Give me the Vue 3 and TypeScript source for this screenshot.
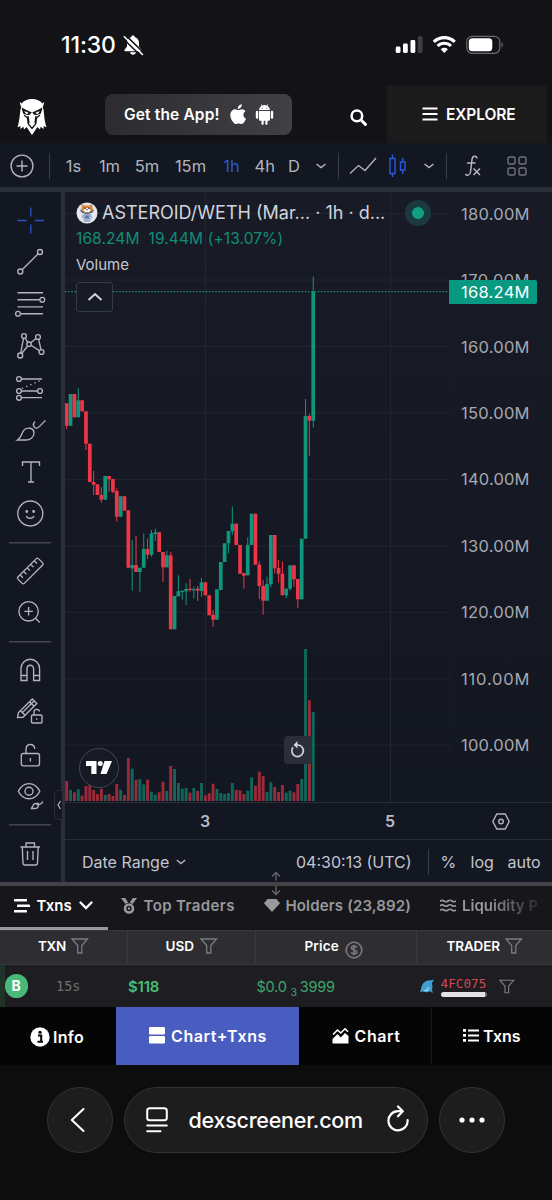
<script setup lang="ts">
type Candle = [number, number, number, number, 0 | 1]

const STEP = 3.852
const FIRST_X = 66.7

// [body top, body bottom, wick top, wick bottom, rising]
const candles: Candle[] = [
  [403.3, 425.7, 403.3, 429.3, 0], [394, 425.7, 394, 425.7, 1], [394, 417.3, 394, 417.3, 0], [400.3, 417.3, 388.3, 417.3, 1],
  [400.3, 411.3, 400.3, 411.3, 0], [411.3, 443.7, 411.3, 450, 0], [443.7, 482, 443.7, 482, 0], [482, 484.7, 471, 495, 0],
  [484.3, 495, 484.3, 495, 0], [495, 499.7, 487.3, 502.7, 0], [476, 499.7, 476, 499.7, 1], [476, 479.3, 476, 491.7, 0],
  [479, 491.7, 479, 493.3, 0], [491, 516.7, 488.3, 521.3, 0], [496.3, 516.7, 496.3, 516.7, 1], [496.3, 510.7, 496.3, 510.7, 0],
  [510.3, 567.7, 510.3, 567.7, 0], [565, 568.3, 540, 590.7, 1], [565, 572, 536, 572, 0], [567.7, 572, 567.7, 591.7, 1],
  [549, 567.7, 533.3, 567.7, 1], [549, 554.7, 538.3, 559, 0], [533.3, 554.7, 530, 556.7, 1], [532.3, 534, 528.7, 541, 1],
  [532.3, 552, 532.3, 552, 0], [552, 567.3, 552, 582, 0], [555.3, 567.3, 550.7, 567.3, 1], [555.3, 629.3, 551.7, 629.3, 0],
  [596, 629.3, 596, 629.3, 1], [591.3, 596.3, 575.3, 596.3, 1], [590.7, 592, 590.7, 599.7, 1], [589, 591.3, 583.3, 605, 1],
  [588.7, 590, 579, 591.7, 0], [589, 590.3, 586.7, 598.3, 1], [588.7, 590.7, 586, 601, 0], [582.3, 591, 577.7, 596.7, 1],
  [582.3, 595.3, 582.3, 595.3, 0], [595.3, 615.3, 595.3, 615.3, 0], [614.7, 619.7, 610, 627, 0], [589.3, 619.7, 589.3, 619.7, 1],
  [562, 590, 562, 590, 1], [543.3, 562, 543.3, 562, 1], [531, 543.3, 531, 553.3, 1], [523.7, 531.3, 506.7, 535, 1],
  [523.7, 545, 523.7, 545, 0], [545, 573.7, 545, 573.7, 0], [573, 575.7, 573, 588.7, 0], [545, 575.3, 537.3, 575.3, 1],
  [513.7, 545, 513.7, 545, 1], [513.7, 564.7, 513.7, 564.7, 0], [564.7, 586, 561, 599, 0], [586, 600.7, 580, 614.7, 0],
  [584, 600.7, 576.7, 600.7, 1], [535, 584.3, 535, 587.3, 1], [535, 568.3, 535, 573.3, 0], [568, 573.7, 560, 582.7, 0],
  [573.7, 595.3, 561.7, 595.3, 0], [588.7, 595.3, 588.7, 598.3, 1], [565.3, 588.7, 565.3, 590.7, 1], [565.3, 579.3, 565.3, 586.7, 0],
  [579, 599.3, 579, 607.7, 0], [538.7, 599.3, 538.7, 599.3, 1], [416, 538.7, 399, 538.7, 1], [416, 420.7, 414, 455.7, 0],
  [291.7, 420.7, 276.7, 427.3, 1],
]

const volumes: number[] = [
  20, 11, 8.7, 11.7, 5.3, 15, 16, 11, 7, 12.3, 6, 7, 5, 17, 11.3, 6, 43, 32.3, 21.3, 22, 16.7, 21.3, 9.3, 6.3, 8.7,
  19.3, 10, 35, 32, 18, 12.3, 13, 8.3, 13, 10, 18, 5.7, 7.7, 17.3, 12, 8, 7, 8, 18, 11, 10.7, 7, 10.3, 23.7, 15.3,
  29.3, 25, 9, 18.7, 14, 9, 16, 8.3, 10.3, 8.7, 17, 22, 152, 100.7, 89,
]

const cx = (i: number): number => FIRST_X + i * STEP
const tone = (i: number): string => (candles[i][4] ? 'up' : 'down')

const prices = [180, 170, 160, 150, 140, 130, 120, 110, 100].map((value, i) => ({
  label: `${value}.00M`,
  y: 213.6 + i * 66.45,
}))

const intervals = ['1s', '1m', '5m', '15m', '1h', '4h', 'D']
</script>

<template>
  <div class="phone">
    <div class="status">
      <span class="clock">11:30</span>
      <svg class="bell" width="22" height="22" viewBox="0 0 22 22">
        <path d="M11 1.500c-1 0-1.700.6-1.800 1.500C6.500 3.900 5 6 5 9v3.500L2.600 15.700c-.5.9 0 1.500.8 1.500h15.200c.8 0 1.300-.6.8-1.500L17 12.500V9c0-3-1.500-5.100-4.200-6-.1-.9-.8-1.500-1.800-1.500zM8 18.300c.3 1.500 1.500 2.400 3 2.400s2.700-.9 3-2.400z" fill="#fff" />
        <path d="M3.500 1.200L22 19" stroke="#121217" stroke-width="1.600" />
        <path d="M2.300 2.800L20.500 20.500" stroke="#fff" stroke-width="1.600" stroke-linecap="round" />
        <path d="M1 4.500L18.500 21.500" stroke="#121217" stroke-width="1.500" />
      </svg>
      <svg class="signals" width="112" height="22" viewBox="394 34 112 22">
        <rect x="395.700" y="48.500" width="4.800" height="6.500" rx="1.400" fill="#fff" transform="translate(0 -2)" />
        <rect x="403" y="43.500" width="4.800" height="9.500" rx="1.400" fill="#fff" />
        <rect x="410.500" y="40" width="4.800" height="13" rx="1.400" fill="#fff" />
        <rect x="417.800" y="36.300" width="4.800" height="16.700" rx="1.400" fill="#3e3e43" />
        <g fill="none" stroke="#fff" stroke-width="3.100">
          <path d="M433.800 41.800a15.200 15.200 0 0 1 21 0" />
          <path d="M437.600 46a9.600 9.600 0 0 1 13.400 0" />
        </g>
        <path d="M444.300 53l-3.600-3.700a5.200 5.200 0 0 1 7.200 0z" fill="#fff" />
        <rect x="466.800" y="36.300" width="33" height="17" rx="5.300" fill="none" stroke="#6c6c70" stroke-width="1.200" />
        <rect x="468.800" y="38.300" width="23.500" height="13" rx="3.500" fill="#fff" />
        <path d="M501.600 42v5.500c1.700-.7 1.700-4.800 0-5.500z" fill="#6c6c70" />
      </svg>
    </div>

    <header class="header">
      <svg class="logo" width="30" height="36" viewBox="0 0 30 36">
        <path fill="#fff" d="M15 0c4.500 0 8.300 1.600 10.300 4.600l1.900-1.500c-.2 2-.6 3.300-1.400 4.700 1.600 4.800 1 12.400 3.700 20.400l-3-1.200.3 3-3.200-2.300-.6 2.700-2.600-2.300L15 36l-5.400-7.900L7 30.400l-.6-2.700-3.200 2.300.3-3-3 1.200C3.200 20.200 2.600 12.600 4.200 7.800 3.400 6.400 3 5.100 2.800 3.100l1.900 1.500C6.700 1.600 10.500 0 15 0z" />
        <path fill="#121217" d="M4.500 8.500l7.500 3.700 3 1.300 3-1.300 7.500-3.700-1.600 6-5.100 1.800-2.200-1.100L15 12.700l-1.600 2.500-2.200 1.100-5.100-1.800z" />
        <path fill="#fff" d="M7.500 12l4 1.800-.8 1.200-2.400-.8zM22.500 12l-4 1.800.8 1.200 2.400-.8z" />
        <path fill="none" stroke="#121217" stroke-width="1.300" d="M7 16l3.500 3 .7 5.700L15 29.500l3.800-4.800.7-5.700L23 16M11 17l1 7M19 17l-1 7" />
      </svg>
      <div class="get-app">
        <span class="get-label">Get the App!</span>
        <svg width="17" height="21" viewBox="0 0 17 21" fill="#fff">
          <path d="M11.800.2c.2 1.300-.4 2.500-1.100 3.400-.7.900-1.800 1.500-2.900 1.400-.2-1.200.4-2.500 1.100-3.300C9.700.9 10.800.3 11.800.2zM16 14.800c-.4 1.100-1 2.100-1.600 3-.9 1.300-1.700 2.300-2.900 2.300s-1.500-.7-2.900-.7c-1.400 0-1.800.7-2.900.7-1.200 0-2.100-1.200-3-2.500C.4 14.700-.8 9.600 1.800 6.900c.9-1 2.100-1.600 3.300-1.600 1.300 0 2.300.8 3.400.8s1.800-.8 3.500-.8c1.300 0 2.600.7 3.500 1.900-3.200 1.900-2.600 6.400.5 7.600z" />
        </svg>
        <svg class="android" width="19" height="21" viewBox="0 0 19 21" fill="#fff">
          <path d="M4 6.100C4.200 3.800 5.400 2.500 6.700 1.700L5.900.3l.4-.2.900 1.400a6.500 6.500 0 0 1 4.600 0l.9-1.400.4.2-.8 1.400c1.300.8 2.500 2.100 2.700 4.400zM4 6.900h11v8.600c0 .8-.5 1.300-1.300 1.300H12.500v3c0 1.500-2.200 1.500-2.200 0v-3H8.700v3c0 1.500-2.200 1.500-2.200 0v-3H5.300c-.8 0-1.300-.5-1.300-1.300z" />
          <rect x=".8" y="6.700" width="2.400" height="8" rx="1.200" />
          <rect x="15.800" y="6.700" width="2.400" height="8" rx="1.200" />
          <circle cx="7.200" cy="4" r=".6" fill="#444" /><circle cx="11.800" cy="4" r=".6" fill="#444" />
        </svg>
      </div>
      <svg class="search" width="17" height="17" viewBox="0 0 17 17" fill="none" stroke="#fff" stroke-linecap="round">
        <circle cx="6.900" cy="6.900" r="5.300" stroke-width="2.500" />
        <path d="M11 11l4.400 4.400" stroke-width="3" />
      </svg>
      <div class="explore">
        <svg width="16" height="14" viewBox="0 0 16 14" stroke="#fff" stroke-width="2"><path d="M.5 1.500h15M.5 7h15M.5 12.500h15" /></svg>
        <span>EXPLORE</span>
      </div>
    </header>

    <div class="toolbar">
      <svg class="plus" width="24" height="24" viewBox="0 0 24 24" fill="none" stroke="#b2b5be" stroke-width="1.400">
        <circle cx="12" cy="12" r="10.900" /><path d="M12 6.500v11M6.500 12h11" />
      </svg>
      <i class="tsep"></i>
      <span v-for="(item, i) in intervals" :key="item" class="interval" :class="['iv' + i, { active: item === '1h' }]">{{ item }}</span>
      <svg class="tchev" width="12" height="8" viewBox="0 0 12 8" fill="none" stroke="#b2b5be" stroke-width="1.500"><path d="M1.500 2l4.500 3.500L10.500 2" /></svg>
      <i class="tsep sep2"></i>
      <svg class="linetype" width="28" height="20" viewBox="0 0 28 20" fill="none" stroke="#b2b5be" stroke-width="1.300"><path d="M1 17.500l8.500-8 6.500 5L27 2" /></svg>
      <svg class="candletype" width="20" height="26" viewBox="0 0 20 26" fill="none" stroke="#2b57d9" stroke-width="1.500"><path d="M2 5.500h5v15H2zM4.500 5.500V1.500M4.500 20.500v3.500M12.500 9h4.500v8h-4.500zM14.700 9V5M14.700 17v4" /></svg>
      <svg class="tchev2" width="12" height="8" viewBox="0 0 12 8" fill="none" stroke="#b2b5be" stroke-width="1.500"><path d="M1.500 2l4.500 3.500L10.500 2" /></svg>
      <i class="tsep sep3"></i>
      <svg class="fx" width="18" height="22" viewBox="0 0 18 22" fill="none" stroke="#b2b5be" stroke-width="1.500">
        <path d="M13 3.500C12.500.5 8.500.3 8 4.500L6.500 17c-.4 3.600-3.800 4-5 2M3 8h8.500M9.500 13.500l6.500 6.500M16 13.500L9.500 20" />
      </svg>
      <svg class="tiles" width="20" height="20" viewBox="0 0 20 20" fill="none" stroke="#70747f" stroke-width="1.400">
        <rect x="1" y="1" width="7" height="7" rx="1.500" /><rect x="12" y="1" width="7" height="7" rx="1.500" />
        <rect x="1" y="12" width="7" height="7" rx="1.500" /><rect x="12" y="12" width="7" height="7" rx="1.500" />
      </svg>
    </div>

    <div class="workspace">
      <aside class="rail">
        <svg viewBox="0 0 42 42" class="cross"><path d="M8.500 21.500h9M26 21.500h9M21.800 8.500v9M21.800 25.500v9" /></svg>
        <svg viewBox="0 0 42 42"><circle cx="31" cy="11" r="2.500" /><circle cx="11.300" cy="30.500" r="2.500" /><path d="M29.200 12.800L13.100 28.700" /></svg>
        <svg viewBox="0 0 42 42"><path d="M8.500 9.700H34M8.500 16.700h22.300M8.500 23.800H34M11.500 30.700H34" /><circle cx="33.300" cy="16.700" r="2.400" /><circle cx="9" cy="30.700" r="2.400" /></svg>
        <svg viewBox="0 0 42 42"><circle cx="15" cy="11" r="2.400" /><circle cx="29" cy="12" r="2.400" /><circle cx="20" cy="19.200" r="2.200" /><circle cx="11.200" cy="30.500" r="2.500" /><circle cx="32.500" cy="27" r="2.400" /><path d="M14.500 13.400l-2.800 14.700M16.200 13.100l2.600 4.200M21.700 17.800l5.400-4.300M29.600 14.400l2.400 10.200M22 20.300l8.500 5.300M18.700 21l-6 7.500" /></svg>
        <svg viewBox="0 0 42 42"><circle cx="10" cy="12" r="2.400" /><path d="M12.400 12H33M12.400 24h16.200M12.400 30.600H33" /><path d="M13 21.500L33 13" stroke-dasharray="1.300 3.200" /><circle cx="10" cy="24" r="2.400" /><circle cx="31" cy="24" r="2.400" /><circle cx="10" cy="30.800" r="2.400" /></svg>
        <svg viewBox="0 0 42 42"><path d="M8.500 31c4-2.500 4-6.500 6-9.300 3-4.200 10.700-3.200 10.500 2.500-.2 4.300-4 6.800-8 6.800zM26 12.500c-3 3-1.300 7 2 6.500 2-.4 4.500-4 8.500-7.500" /></svg>
        <svg viewBox="0 0 42 42"><path d="M13.500 15v-4h17v4M22 11v20M19 31h6" /></svg>
        <svg viewBox="0 0 42 42"><circle cx="21.300" cy="20.500" r="12.500" /><path d="M17.500 22.800c.8 3.200 6.600 3.200 7.400 0" /><circle cx="17.800" cy="18.500" r=".8" class="dot" /><circle cx="24.600" cy="18.500" r=".8" class="dot" /></svg>
        <i class="rsep"></i>
        <svg viewBox="0 0 42 42"><g transform="translate(21.300 21) rotate(-45)"><rect x="-14.500" y="-4.500" width="29" height="9" rx="1.500" /><path d="M-10-4.500v4M-5-4.500v4M0-4.500v4M5-4.500v4M10-4.500v4" /></g></svg>
        <svg viewBox="0 0 42 42"><circle cx="19.600" cy="19.300" r="9.700" /><path d="M19.600 15v8.600M15.300 19.300h8.600M26.500 26.300l4.200 4.200" /></svg>
        <i class="rsep"></i>
        <svg viewBox="0 0 42 42"><path d="M12 31.500v-12a9.300 9.300 0 0 1 18.600 0v12h-6v-12a3.300 3.300 0 0 0-6.600 0v12zM12 26.500h6M24.600 26.500h6" /></svg>
        <svg viewBox="0 0 42 42"><path d="M8.500 26.500l1-5L23.300 8l4.500 4.500L14 26.300zM11.500 19.700l4.300 4.300M13.500 21.500L25 10M20.500 10.700l4.500 4.500" /><rect x="22.500" y="24" width="10.500" height="8" rx="1" /><path d="M25 24v-3c0-3.500 5-3.500 5.500-.5M27.700 27.300v1.500" /></svg>
        <svg viewBox="0 0 42 42"><rect x="12.300" y="20.500" width="18.200" height="12.300" rx="2" /><path d="M17 20.500v-4c0-6.500 8-6.500 8.800-.7M21.400 25v3.500" /></svg>
        <svg viewBox="0 0 42 42"><path d="M9.300 16.200C14.500 6 25.500 6 30.800 16.200 25.500 26.300 14.500 26.300 9.300 16.200z" /><circle cx="20" cy="16.200" r="4" /><path d="M22 33.500c2-1 1.500-5 4.500-5s4.500 5-1 5zM29 27.500c0 3 3 2.500 5-1" /></svg>
        <i class="rsep"></i>
        <svg viewBox="0 0 42 42"><path d="M11.500 15h19.500M17 15v-4h8.500v4M13.300 15l.7 16c0 1.300.6 2 2 2h10.500c1.400 0 2-.7 2-2l.7-16M18.500 19v9M24 19v9" /></svg>
      </aside>

      <div class="gutter">
        <svg class="collapse" width="8" height="30" viewBox="0 0 8 30"><path d="M8 .5H4.500a4 4 0 0 0-4 4v21a4 4 0 0 0 4 4H8" fill="#131722" stroke="#2a2e39" /><path d="M6.500 11L4 15l2.500 4" fill="none" stroke="#b2b5be" stroke-width="1.200" /></svg>
      </div>

      <div class="chart-col">
        <div class="plot">
          <svg class="chart" width="487" height="610" viewBox="65 192 487 610">
            <g class="grid">
              <path v-for="p in prices" :key="p.label" :d="`M65 ${p.y}H449`" />
              <path d="M205.500 192V802M390.500 192V802" />
            </g>
            <path d="M449.500 192V802" stroke="#171b25" />
            <g class="volume">
              <rect v-for="(v, i) in volumes" :key="i" :class="tone(i)" :x="cx(i) - 1.45" :y="801 - v" width="2.9" :height="v" />
            </g>
            <g>
              <g v-for="(c, i) in candles" :key="i" :class="tone(i)">
                <rect :x="cx(i) - 0.5" :y="c[2]" width="1" :height="c[3] - c[2]" />
                <rect :x="cx(i) - 1.85" :y="c[0]" width="3.7" :height="c[1] - c[0]" />
              </g>
            </g>
            <path d="M65 291.700H449" stroke="#109a80" stroke-width="1.200" stroke-dasharray="1.400 1.800" />
            <text v-for="p in prices" :key="p.label" class="price" x="461" :y="p.y + 6" textLength="68.5">{{ p.label }}</text>
            <path d="M449 280h86a2 2 0 0 1 2 2v20a2 2 0 0 1-2 2h-86z" fill="#089981" />
            <text class="price now" x="461" y="298" textLength="68.5">168.24M</text>
          </svg>
          <div class="legend">
            <div class="title-row">
              <svg width="22" height="22" viewBox="0 0 22 22">
                <circle cx="11" cy="11" r="10.500" fill="#e6e7ea" />
                <path d="M6 2l2.500 1.500h5L16 2l.8 5-1.800 3.500H7L5.300 7z" fill="#d98a45" />
                <ellipse cx="11" cy="8" rx="3.300" ry="2" fill="#fff" />
                <circle cx="9" cy="6.200" r=".8" fill="#222" /><circle cx="13" cy="6.200" r=".8" fill="#222" /><circle cx="11" cy="7.800" r=".7" fill="#222" />
                <path d="M5 7.500c0 5 12 5 12 0" fill="none" stroke="#51565f" stroke-width="1.300" />
                <path d="M7 12h8l1.500 4-2 .5v3.500h-7v-3.500l-2-.5z" fill="#9fb4d0" />
                <path d="M9 13.500h4v3H9z" fill="#5b7ba8" />
              </svg>
              <span class="pair">ASTEROID/WETH (Mar... · 1h · d...</span>
              <i class="live"></i>
            </div>
            <div class="change"><span>168.24M</span><span>19.44M (+13.07%)</span></div>
            <div class="vol-label">Volume</div>
            <div class="fold"><svg width="16" height="10" viewBox="0 0 16 10" fill="none" stroke="#d1d4dc" stroke-width="2"><path d="M1.500 8L8 2l6.500 6" /></svg></div>
          </div>
          <div class="tv">
            <svg width="26" height="14" viewBox="0 0 26 14" fill="#fff"><path d="M0 0h10.500v13H5.300V5H0z" /><circle cx="14.200" cy="2.600" r="2.500" /><path d="M18.500 0H26l-5.500 13h-6z" /></svg>
          </div>
          <div class="reset">
            <svg width="16" height="18" viewBox="0 0 16 18" fill="none" stroke="#d1d4dc" stroke-width="1.700"><path d="M3 6.200A5.800 5.800 0 1 0 8 4H4.500" /><path d="M7.500 0L3.500 4l4 3.500z" fill="#d1d4dc" stroke="none" /></svg>
          </div>
        </div>
        <div class="time-axis">
          <b class="day3">3</b><b class="day5">5</b>
          <svg class="gear" width="18" height="17" viewBox="0 0 18 17" fill="none" stroke="#b2b5be" stroke-width="1.400"><path d="M4.800 1h8.400l4 7.500-4 7.500H4.800L.8 8.500z" /><circle cx="9" cy="8.500" r="2.300" /></svg>
        </div>
        <div class="range-bar">
          <span class="range">Date Range</span>
          <svg width="10" height="8" viewBox="0 0 10 8" fill="none" stroke="#b2b5be" stroke-width="1.400"><path d="M.8 2L5 5.500 9.200 2" /></svg>
          <span class="utc">04:30:13 (UTC)</span>
          <i></i>
          <span class="pct">%</span><span class="log">log</span><span class="auto">auto</span>
        </div>
      </div>
    </div>

    <div class="split">
      <svg width="10" height="26" viewBox="0 0 10 26" fill="none" stroke="#67676c" stroke-width="1.300"><path d="M5 9.500V2M1 5.500l4-4 4 4M5 15v8M1 19.500l4 4 4-4" /></svg>
    </div>

    <nav class="tabs">
      <div class="tab on">
        <svg width="16" height="14" viewBox="0 0 16 14" fill="#fff"><rect x="0" y="0" width="13" height="2.600" rx=".7" /><rect x="3" y="5.500" width="13" height="2.600" rx=".7" /><rect x="0" y="11" width="13" height="2.600" rx=".7" /></svg>
        <span class="t-txns">Txns</span>
        <svg width="14" height="9" viewBox="0 0 14 9" fill="none" stroke="#fff" stroke-width="2.300" stroke-linecap="round"><path d="M1.500 1.500L7 7l5.500-5.500" /></svg>
      </div>
      <div class="tab top">
        <svg width="16" height="16" viewBox="0 0 16 16" fill="#99999c"><path d="M0 0h4.200l3 4.500-2.800 1.600zM16 0h-4.200l-3 4.500 2.800 1.600z" /><circle cx="8" cy="10.500" r="4" fill="none" stroke="#99999c" stroke-width="2.600" /><circle cx="8" cy="10.500" r="1.200" /></svg>
        <span>Top Traders</span>
      </div>
      <div class="tab hold">
        <svg width="16" height="13" viewBox="0 0 16 13" fill="#99999c"><path d="M3.500 0h9L16 4.300 8 13 0 4.300z" /></svg>
        <span>Holders (23,892)</span>
      </div>
      <div class="tab liq">
        <svg width="16" height="13" viewBox="0 0 16 13" fill="none" stroke="#99999c" stroke-width="1.700"><path d="M0 2.500Q2 .5 4 2t4 0 4 0 4 0M0 7Q2 5 4 6.500t4 0 4 0 4 0M0 11.500q2-2 4-.5t4 0 4 0 4 0" /></svg>
        <span>Liquidity P</span>
      </div>
    </nav>

    <div class="thead">
      <div class="c-txn"><span>TXN</span><svg width="18" height="16" viewBox="0 0 18 16"><path d="M1 1h15.500l-5.700 6.500V15H6.700V7.500z" /></svg></div>
      <div class="c-usd"><span>USD</span><svg width="18" height="16" viewBox="0 0 18 16"><path d="M1 1h15.500l-5.700 6.500V15H6.700V7.500z" /></svg></div>
      <div class="c-price"><span>Price</span><svg class="coin" width="18" height="18" viewBox="0 0 18 18"><circle cx="9" cy="9" r="7.800" /><path d="M11.800 6.800C11.300 4.500 6.500 4.600 6.500 7c0 2.500 5.300 1.500 5.300 4.100 0 2.300-5 2.300-5.500 0M9 3.700v10.600" /></svg></div>
      <div class="c-trader"><span>TRADER</span><svg width="18" height="16" viewBox="0 0 18 16"><path d="M1 1h15.500l-5.700 6.500V15H6.700V7.500z" /></svg></div>
    </div>

    <div class="trow">
      <i class="strip"></i>
      <b class="buy">B</b>
      <span class="age">15s</span>
      <b class="usd">$118</b>
      <span class="cost">$0.0<small>3</small>3999</span>
      <svg class="dolphin" width="14" height="15" viewBox="0 0 14 15"><path d="M13.500.5c-1 .8-1.800.6-3 .7C5 .8 1.500 5 1 10L0 13.500c1-.8 2-1 3-.9 2 .8 5 .8 7-.3l2.500 1.700c.3-1.300 0-2.300-.7-3 1-2.500.8-5 0-7 .9-.8 1.700-2 1.700-3.500z" fill="#3f9fd0" /><path d="M3 11.500c3-.5 5-2 5.500-4.500 1 2 .5 4-.8 5-1.500.5-3.500.3-4.700-.5z" fill="#93cfe9" /></svg>
      <div class="maker"><span>4FC075</span><i></i></div>
      <svg class="rowfunnel" width="16" height="15" viewBox="0 0 18 16"><path d="M1 1h15.500l-5.700 6.500V15H6.700V7.500z" /></svg>
    </div>

    <nav class="bottom">
      <div class="b-info"><svg width="20" height="20" viewBox="0 0 20 20"><circle cx="10" cy="10" r="9.700" fill="#fff" /><path d="M8 8.500h3.200v5.800M7.500 14.800h5.500" stroke="#050505" stroke-width="2" fill="none" /><circle cx="10" cy="5.300" r="1.600" fill="#050505" /></svg><span>Info</span></div>
      <div class="b-both"><svg width="16" height="17" viewBox="0 0 16 17" fill="#fff"><rect width="16" height="7.500" rx="1.200" /><rect y="9" width="16" height="7.500" rx="1.200" /></svg><span>Chart+Txns</span></div>
      <div class="b-chart"><svg width="17" height="16" viewBox="0 0 17 16"><path d="M1 6.500L5.500 2l3.300 3L13 .8l3 3" fill="none" stroke="#fff" stroke-width="1.600" /><path d="M.5 15.500V11l5-5 3.300 3.500L13 5l3.500 3v7.500z" fill="#fff" /></svg><span>Chart</span></div>
      <div class="b-txns"><svg width="16" height="13" viewBox="0 0 16 13" fill="#fff"><path d="M0 0h3v2.800H0zM0 5h3v2.800H0zM0 10h3v2.800H0zM5 .4h11v2H5zM5 5.400h11v2H5zM5 10.400h11v2H5z" /></svg><span>Txns</span></div>
    </nav>

    <footer class="browser">
      <div class="round"><svg width="15" height="26" viewBox="0 0 15 26" fill="none" stroke="#fff" stroke-width="2" stroke-linecap="round" stroke-linejoin="round"><path d="M13.500 2L1.800 13l11.700 11" /></svg></div>
      <div class="pill">
        <svg class="reader" width="22" height="26" viewBox="0 0 22 26" fill="none" stroke="#fff" stroke-width="2" stroke-linecap="round"><rect x="1.200" y="1.200" width="19.600" height="12" rx="2.500" /><path d="M1.200 18.500h19.600M1.200 24.300h13.300" /></svg>
        <span>dexscreener.com</span>
        <svg class="reload" width="22" height="27" viewBox="0 0 22 27" fill="none" stroke="#fff" stroke-width="2.200" stroke-linecap="round" stroke-linejoin="round"><path d="M20.600 15A9.600 9.600 0 1 1 11 6.200h4.500M11 1.500l4.800 4.800-4.800 5" /></svg>
      </div>
      <div class="round dots"><svg width="26" height="6" viewBox="0 0 26 6" fill="#fff"><circle cx="3" cy="3" r="2.600" /><circle cx="13" cy="3" r="2.600" /><circle cx="23" cy="3" r="2.600" /></svg></div>
    </footer>
  </div>
</template>

<style>
html, body { background: #0d0d0d; }
</style>

<style scoped>
.phone { width: 552px; height: 1200px; overflow: hidden; background: #121217; color: #fff; font-family: Inter, "Liberation Sans", sans-serif; }
.phone * { box-sizing: border-box; }
.phone span, .phone b { white-space: nowrap; }
svg { display: block; flex: none; }

.status { height: 85px; display: flex; align-items: center; padding: 5px 0 0 61px; }
.clock { font-size: 23px; font-weight: 500; letter-spacing: -0.1px; line-height: 28px; width: 61px; }
.signals { margin-left: 249.500px; }

.header { height: 58px; display: flex; padding-left: 16.500px; }
.logo { margin-top: 14px; }
.get-app { margin: 9px 0 0 58.500px; width: 187px; height: 41px; border-radius: 8px; background: linear-gradient(90deg, #2b2b30, #414145); display: flex; align-items: center; padding-left: 19px; }
.get-label { width: 106px; font-size: 15.500px; font-weight: 600; letter-spacing: 0.15px; }
.android { margin-left: 7.500px; }
.search { margin: 24px 0 0 58px; }
.explore { margin-left: 20px; width: 160px; background: #1b1b1b; display: flex; align-items: center; padding-left: 35px; font-weight: 600; font-size: 15.500px; letter-spacing: -0.1px; gap: 8px; }

.toolbar { height: 49px; background: #131722; border-bottom: 5px solid #2a2e39; display: flex; align-items: center; padding: 2px 0 0 9.500px; color: #b2b5be; font-size: 16.500px; }
.tsep { width: 1px; height: 26px; background: #3a3e49; margin-left: 15px; }
.interval { text-align: center; }
.interval.active { color: #2b57d9; }
.iv0 { width: 48px; } .iv1 { width: 24px; } .iv2 { width: 51px; } .iv3 { width: 36px; } .iv4 { width: 46px; } .iv5 { width: 19px; } .iv6 { width: 41px; }
.sep2 { margin-left: 11px; }
.linetype { margin-left: 10px; }
.candletype { margin-left: 11px; }
.tchev2 { margin-left: 15px; }
.sep3 { margin-left: 11px; }
.fx { margin-left: 17px; }
.tiles { margin-left: 25px; }

.workspace { height: 690px; display: flex; background: #131722; }
.rail { width: 61px; padding: 7px 0 0 9px; background: #131722; }
.rail svg { width: 42px; height: 42px; fill: none; stroke: #b2b5be; stroke-width: 1.350; }
.rail .cross { stroke: #2a52c8; }
.rail .dot { fill: #b2b5be; }
.rsep { display: block; height: 15px; width: 42px; background: linear-gradient(#434651, #434651) center / 100% 1.500px no-repeat; }
.gutter { width: 4px; background: #2a2e39; position: relative; }
.collapse { position: absolute; left: -7px; top: 598px; }
.chart-col { flex: 1; min-width: 0; background: #131722; }
.plot { height: 610px; position: relative; background: linear-gradient(#181b26, #131722); }
.chart { position: absolute; left: 0; top: 0; }
.grid path { stroke: #222631; stroke-width: 1; }
.up { fill: #0f977e; }
.down { fill: #ef3649; }
.volume { opacity: 0.620; }
.price { fill: #a6a8b0; font-size: 16.500px; }
.now { fill: #fff; }
.legend { position: relative; padding: 9px 0 0 11px; color: #d1d4dc; }
.title-row { display: flex; align-items: center; height: 23px; }
.pair { font-size: 18px; margin-left: 4px; width: 302.500px; }
.live { width: 26px; height: 26px; border-radius: 50%; background: radial-gradient(circle, #12a083 0 5.500px, #1a3a40 6.200px); }
.change { display: flex; gap: 9px; color: #118d78; font-size: 15.500px; letter-spacing: 0.1px; line-height: 20px; margin-top: 5px; }
.vol-label { font-size: 15px; line-height: 20px; margin-top: 6px; color: #c5c8d0; }
.fold { margin-top: 7px; width: 37px; height: 30px; border: 1px solid #363a45; border-radius: 3px; background: #171b26; display: flex; align-items: center; justify-content: center; }
.tv { position: absolute; left: 13.500px; top: 555.500px; width: 40px; height: 40px; border-radius: 50%; background: #161a25; border: 1.500px solid #434651; display: flex; align-items: center; justify-content: center; }
.reset { position: absolute; left: 219px; top: 544px; width: 28px; height: 28px; border-radius: 4px; background: #2a2e39; display: flex; align-items: center; justify-content: center; }
.time-axis { height: 37px; border-top: 1px solid #282c37; display: flex; align-items: center; font-size: 16px; color: #b9bbc4; padding-left: 134px; }
.day3, .day5 { width: 12px; text-align: center; font-weight: 600; }
.day5 { margin-left: 173px; }
.gear { margin-left: 95.500px; }
.range-bar { height: 43px; border-top: 1px solid #282c37; display: flex; align-items: center; padding: 2px 0 0 17px; font-size: 16px; color: #c3c5cd; }
.range { width: 94px; }
.utc { margin-left: 110px; width: 131.500px; }
.range-bar i { width: 1px; height: 26px; background: #3a3e49; }
.pct { margin-left: 12px; width: 30px; }
.log { width: 37px; }

.split { height: 4px; background: #434347; position: relative; z-index: 1; }
.split svg { position: absolute; left: 270.500px; top: -11px; }

.tabs { height: 44px; background: #17171b; display: flex; font-size: 15px; font-weight: 600; color: #99999c; overflow: hidden; }
.tab { display: flex; align-items: center; height: 44px; padding-bottom: 5px; flex: none; }
.tab.on { width: 108px; padding-left: 13.500px; color: #fff; border-bottom: 3px solid #98989d; padding-bottom: 2px; }
.t-txns { margin-left: 7px; width: 42.500px; }
.top { margin-left: 13px; gap: 6.500px; width: 142.500px; letter-spacing: 0.4px; }
.hold { gap: 6px; width: 176px; letter-spacing: 0.15px; }
.liq { gap: 6.500px; width: 112px; -webkit-mask-image: linear-gradient(90deg, #000 45px, transparent 108px); mask-image: linear-gradient(90deg, #000 45px, transparent 108px); }

.thead { height: 35px; background: #2d2d32; border-top: 1px solid #36363b; border-bottom: 1px solid #36363b; display: grid; grid-template-columns: 127.500px 128.500px 160.500px 1fr; font-size: 13.500px; font-weight: 600; }
.thead div { display: flex; align-items: center; border-right: 1px solid #38383d; padding-bottom: 3px; }
.thead div:last-child { border: 0; }
.thead svg, .rowfunnel { fill: none; stroke: #7c7c80; stroke-width: 1.300; }
.thead .coin { stroke-width: 1.700; stroke: #77777b; margin: 7px 0 0 5.500px; }
.thead span { flex: none; }
.c-txn { padding-left: 38px; } .c-txn span { width: 32.500px; letter-spacing: -0.3px; }
.c-usd { padding-left: 38px; } .c-usd span { width: 34px; }
.c-price { padding-left: 48.500px; } .c-price span { width: 35px; letter-spacing: 0.15px; }
.c-trader { padding-left: 30px; } .c-trader span { width: 58px; letter-spacing: -0.15px; }

.trow { height: 42px; background: #1e1e22; display: flex; align-items: center; color: #48bb78; }
.strip { width: 4.500px; height: 42px; background: #1f3329; }
.buy { width: 23.500px; height: 23.500px; border-radius: 50%; background: #48b978; color: #fff; font-size: 14px; text-align: center; line-height: 24px; }
.age { margin-left: 28px; width: 72px; color: #6e6e73; font-family: "DejaVu Sans Mono", monospace; font-size: 13.500px; }
.usd { width: 128.500px; font-size: 15px; font-weight: 600; letter-spacing: -0.2px; }
.cost { width: 163px; font-size: 14.500px; letter-spacing: -0.25px; color: #3fa66b; }
.cost small { font-size: 10.500px; position: relative; top: 4px; margin: 0 3px 0 4px; }
.maker { margin-left: 7px; width: 46px; color: #d64753; font-family: "DejaVu Sans Mono", monospace; font-size: 12.700px; line-height: 14px; padding-top: 1px; }
.maker i { display: block; height: 5px; border-radius: 3px; margin-top: 1px; background: linear-gradient(90deg, #e2e2e4 95%, #77777b 95%); }
.rowfunnel { margin-left: 12.500px; }

.bottom { height: 58px; background: #050505; display: grid; grid-template-columns: 116px 182.500px 133px 1fr; font-size: 16px; font-weight: 600; }
.bottom div { display: flex; align-items: center; padding-bottom: 1px; }
.bottom .b-info { padding: 2px 0 0 30px; gap: 3px; letter-spacing: 0.3px; }
.b-both { background: #495dc0; padding-left: 33px; gap: 6px; letter-spacing: 0.6px; }
.b-chart { padding-left: 33px; gap: 6px; border-right: 1px solid #17171a; letter-spacing: 0.6px; }
.b-txns { padding-left: 31px; gap: 4.500px; }

.browser { height: 135px; background: #0d0d0d; display: flex; padding: 22px 0 0 46.500px; gap: 11px; }
.round { width: 66px; height: 66px; border-radius: 50%; border: 1px solid #333; background: #1d1d1d; display: flex; align-items: center; justify-content: center; }
.round:first-child { padding-right: 5px; }
.dots { padding-right: 1px; }
.pill { width: 304.500px; height: 66px; border-radius: 33px; border: 1px solid #333; background: #1d1d1d; display: flex; align-items: center; padding-left: 21px; font-size: 21.500px; font-weight: 500; letter-spacing: -0.25px; }
.pill span { width: 198px; margin-left: 21px; }
.reload { margin-top: -3px; }
</style>
